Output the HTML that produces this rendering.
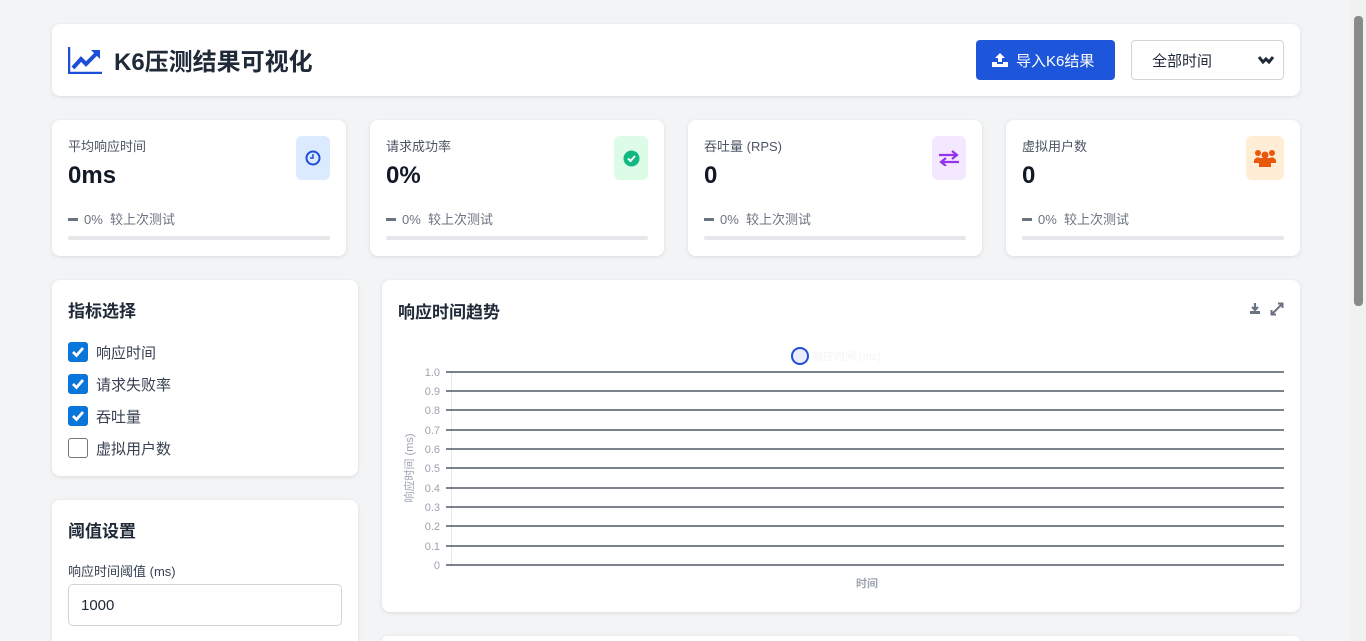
<!DOCTYPE html>
<html style="overflow:hidden;height:641px"><head><meta charset="utf-8"><style>
*{box-sizing:border-box;margin:0;padding:0}
body{width:1366px;height:641px;overflow:hidden;background:#f3f4f6;font-family:"Liberation Sans","Noto Sans CJK SC",sans-serif;color:#1f2937;position:relative}
.card{position:absolute;background:#fff;border-radius:8px;box-shadow:0 1px 4px rgba(0,0,0,.1)}
.sb{position:absolute;right:0;top:0;width:15px;height:641px;background:#f1f1f1}
.sb .th{position:absolute;left:3px;top:16px;width:9px;height:290px;background:#8a8a8a;border-radius:4px}
.stat .lbl{position:absolute;left:16px;top:16px;font-size:13px;color:#4b5563}
.stat .val{position:absolute;left:16px;top:42px;font-size:24px;font-weight:bold;color:#111827}
.stat .chg{position:absolute;left:16px;top:89px;font-size:13px;color:#6b7280}
.stat .chg i{display:inline-block;width:10px;height:3px;background:#6b7280;vertical-align:middle;margin-right:6px;margin-top:-2px}
.stat .bar{position:absolute;left:16px;right:16px;top:116px;height:4px;background:#e5e7eb;border-radius:2px}
.stat .ic{position:absolute;right:16px;top:16px;width:34px;height:44px;border-radius:6px;display:flex;align-items:center;justify-content:center}
.cb{display:flex;align-items:center;font-size:15px;color:#374151;height:32px}
.cb b{width:20px;height:20px;border-radius:3px;background:#0b76d9;margin-right:8px;display:flex;align-items:center;justify-content:center}
.cb b.off{background:#fff;border:1px solid #767676}
</style></head><body>
<div class="card" style="left:52px;top:24px;width:1248px;height:72px">
 <svg style="position:absolute;left:16px;top:22px" width="35" height="28" viewBox="0 0 35 28"><path d="M1 1V27H34" stroke="#1d4ed8" stroke-width="2.5" fill="none"/><path d="M5 22L13 13L18 18L28 8" stroke="#1d4ed8" stroke-width="4" fill="none"/><path d="M23 4H32V13Z" fill="#1d4ed8"/></svg>
 <div style="position:absolute;left:62px;top:18px;font-size:24px;font-weight:bold;color:#1f2937">K6压测结果可视化</div>
 <div style="position:absolute;left:924px;top:16px;width:139px;height:40px;background:#1d56db;border-radius:4px;color:#fff;font-size:15px;display:flex;align-items:center;padding-left:16px">
  <svg width="16" height="14" viewBox="0 0 16 14" style="margin-right:8px"><path d="M8 0L13 5H10V9H6V5H3Z" fill="#fff"/><path d="M0 9H5V11H11V9H16V14H0Z" fill="#fff"/></svg>导入K6结果</div>
 <div style="position:absolute;left:1079px;top:16px;width:153px;height:40px;border:1px solid #d1d5db;border-radius:4px;font-size:15px;color:#1f2937;padding:9px 0 0 20px">全部时间
  <svg style="position:absolute;right:8px;top:14px" width="18" height="10" viewBox="0 0 18 10"><path d="M2 2L6 7L9 4L12 7L16 2" stroke="#1f2937" stroke-width="3" fill="none"/></svg></div>
</div>

<div class="card stat" style="left:52px;top:120px;width:294px;height:136px"><div class="lbl">平均响应时间</div><div class="val">0ms</div><div class="chg"><i></i>0%&nbsp; 较上次测试</div><div class="bar"></div>
 <div class="ic" style="background:#dbeafe"><svg width="16" height="16"><circle cx="8" cy="8" r="6.5" stroke="#1d4ed8" stroke-width="2" fill="none"/><path d="M8 4V8H5" stroke="#1d4ed8" stroke-width="1.5" fill="none"/></svg></div></div>
<div class="card stat" style="left:370px;top:120px;width:294px;height:136px"><div class="lbl">请求成功率</div><div class="val">0%</div><div class="chg"><i></i>0%&nbsp; 较上次测试</div><div class="bar"></div>
 <div class="ic" style="background:#dcfce7"><svg width="17" height="17"><circle cx="8.5" cy="8.5" r="8" fill="#10b981"/><path d="M5 8.5L7.5 11L12 6" stroke="#fff" stroke-width="2" fill="none"/></svg></div></div>
<div class="card stat" style="left:688px;top:120px;width:294px;height:136px"><div class="lbl">吞吐量 (RPS)</div><div class="val">0</div><div class="chg"><i></i>0%&nbsp; 较上次测试</div><div class="bar"></div>
 <div class="ic" style="background:#f3e8ff;right:16px"><svg width="22" height="16"><path d="M1 5H18M14 1L19 5L14 9" stroke="#9333ea" stroke-width="2.2" fill="none"/><path d="M21 12H4M8 8L3 12L8 16" stroke="#9333ea" stroke-width="2.2" fill="none"/></svg></div></div>
<div class="card stat" style="left:1006px;top:120px;width:294px;height:136px"><div class="lbl">虚拟用户数</div><div class="val">0</div><div class="chg"><i></i>0%&nbsp; 较上次测试</div><div class="bar"></div>
 <div class="ic" style="background:#ffedd5;width:38px"><svg width="22" height="18" fill="#ea580c"><circle cx="4" cy="4" r="3"/><circle cx="18" cy="4" r="3"/><circle cx="11" cy="6" r="3.5"/><path d="M0 13a4 4 0 0 1 6-4h10a4 4 0 0 1 6 4v1H0Z"/><path d="M5 18V14a4 4 0 0 1 4-4h4a4 4 0 0 1 4 4v4Z"/></svg></div></div>

<div class="card" style="left:52px;top:280px;width:306px;height:196px">
 <div style="position:absolute;left:16px;top:17px;font-size:17px;font-weight:bold;color:#1f2937">指标选择</div>
 <div style="position:absolute;left:16px;top:56px">
  <div class="cb"><b><svg width="14" height="12"><path d="M2 6L5.5 9.5L12 2" stroke="#fff" stroke-width="2.8" fill="none"/></svg></b>响应时间</div>
  <div class="cb"><b><svg width="14" height="12"><path d="M2 6L5.5 9.5L12 2" stroke="#fff" stroke-width="2.8" fill="none"/></svg></b>请求失败率</div>
  <div class="cb"><b><svg width="14" height="12"><path d="M2 6L5.5 9.5L12 2" stroke="#fff" stroke-width="2.8" fill="none"/></svg></b>吞吐量</div>
  <div class="cb"><b class="off"></b>虚拟用户数</div>
 </div>
</div>
<div class="card" style="left:52px;top:500px;width:306px;height:141px;border-bottom-left-radius:0;border-bottom-right-radius:0">
 <div style="position:absolute;left:16px;top:17px;font-size:17px;font-weight:bold;color:#1f2937">阈值设置</div>
 <div style="position:absolute;left:16px;top:61px;font-size:13px;color:#374151">响应时间阈值 (ms)</div>
 <div style="position:absolute;left:16px;top:84px;width:274px;height:42px;border:1px solid #d1d5db;border-radius:5px;font-size:15px;padding:12px 12px;color:#1f2937">1000</div>
</div>

<div class="card" style="left:382px;top:280px;width:918px;height:332px">
 <div style="position:absolute;left:16px;top:18px;font-size:17px;font-weight:bold;color:#1f2937">响应时间趋势</div>
 <svg style="position:absolute;left:867px;top:22px" width="36" height="14"><path d="M6 1V7M3 5L6 8L9 5" stroke="#6b7280" stroke-width="2.2" fill="none"/><path d="M1 9H11V12H1Z" fill="#6b7280"/><path d="M23 12L33 2M29 1.5H33.5V6M27 12.5H22.5V8" stroke="#6b7280" stroke-width="2" fill="none"/></svg>
 <svg style="position:absolute;left:0;top:0" width="918" height="332">
  <circle cx="418" cy="76" r="8" fill="#e8eefb" stroke="#1d4ed8" stroke-width="2"/>
  <text x="430" y="80" font-size="11" fill="#f3f4f6" font-family="Liberation Sans,Noto Sans CJK SC,sans-serif">响应时间 (ms)</text>
  <line x1="69.5" y1="92" x2="69.5" y2="286" stroke="#e5e7eb"/>
  <g stroke="#2d3748" stroke-width="1.3">
   <line x1="64" y1="92" x2="902" y2="92"/><line x1="64" y1="111" x2="902" y2="111"/><line x1="64" y1="130" x2="902" y2="130"/><line x1="64" y1="150" x2="902" y2="150"/><line x1="64" y1="169" x2="902" y2="169"/><line x1="64" y1="188" x2="902" y2="188"/><line x1="64" y1="208" x2="902" y2="208"/><line x1="64" y1="227" x2="902" y2="227"/><line x1="64" y1="246" x2="902" y2="246"/><line x1="64" y1="266" x2="902" y2="266"/><line x1="64" y1="285" x2="902" y2="285"/>
  </g>
  <g font-size="11" fill="#9ca3af" text-anchor="end" font-family="Liberation Sans,sans-serif">
   <text x="58" y="96">1.0</text><text x="58" y="115">0.9</text><text x="58" y="134">0.8</text><text x="58" y="154">0.7</text><text x="58" y="173">0.6</text><text x="58" y="192">0.5</text><text x="58" y="212">0.4</text><text x="58" y="231">0.3</text><text x="58" y="250">0.2</text><text x="58" y="270">0.1</text><text x="58" y="289">0</text>
  </g>
  <text transform="translate(31,188) rotate(-90)" text-anchor="middle" font-size="11" fill="#9ca3af" font-family="Liberation Sans,Noto Sans CJK SC,sans-serif">响应时间 (ms)</text>
  <text x="485" y="307" text-anchor="middle" font-size="11" font-weight="bold" fill="#9ca3af" font-family="Liberation Sans,Noto Sans CJK SC,sans-serif">时间</text>
 </svg>
</div>
<div class="card" style="left:382px;top:636px;width:918px;height:5px;border-bottom-left-radius:0;border-bottom-right-radius:0"></div>
<div class="sb"><div class="th"></div></div>
</body></html>
